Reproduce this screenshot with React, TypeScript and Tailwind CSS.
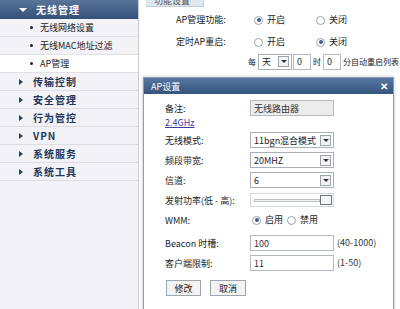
import React from 'react';

const font = { fontFamily: '"Noto Sans CJK SC", "Liberation Sans", sans-serif' };

const subItems = ['无线网络设置', '无线MAC地址过滤', 'AP管理'];
const topItems = ['传输控制', '安全管理', '行为管控', 'VPN', '系统服务', '系统工具'];

function Radio({ checked }: { checked?: boolean }) {
  return (
    <span className="inline-flex w-[9px] h-[9px] rounded-full border border-[#9aa3ad] bg-white items-center justify-center mr-[4px]">
      {checked && <span className="w-[4px] h-[4px] rounded-full bg-[#3f5f8a]" />}
    </span>
  );
}

function Select({ value, w = 'w-[84px]' }: { value: string; w?: string }) {
  return (
    <div className={`${w} h-[16px] border border-[#a9b0b8] bg-white flex items-center justify-between pl-[3px] pr-[2px]`}>
      <span className="text-[9px] leading-none text-[#222]">{value}</span>
      <span className="w-[11px] h-[11px] border border-[#9aa3ad] bg-[#f4f4f4] flex items-center justify-center">
        <span className="w-0 h-0 border-l-[3px] border-r-[3px] border-t-[3px] border-l-transparent border-r-transparent border-t-[#333]" />
      </span>
    </div>
  );
}

function Input({ value, w = 'w-[84px]', bg = 'bg-white' }: { value: string; w?: string; bg?: string }) {
  return (
    <div className={`${w} h-[16px] border border-[#b4bac2] ${bg} flex items-center pl-[3px]`}>
      <span className="text-[9px] leading-none text-[#333]">{value}</span>
    </div>
  );
}

function Row({ label, children, h = 'h-[20px]' }: { label: string; children?: React.ReactNode; h?: string }) {
  return (
    <div className={`flex items-center ${h}`}>
      <span className="w-[85px] shrink-0 text-[9px] text-[#222] leading-none">{label}</span>
      {children}
    </div>
  );
}

export default function App() {
  return (
    <div className="relative w-[400px] h-[309px] overflow-hidden bg-white flex whitespace-nowrap" style={font}>
      {/* 左メニュー */}
      <div className="w-[139px] shrink-0 h-full bg-[#f3f2f7] border-r border-[#c9c9d2] flex flex-col">
        <div className="h-[19px] bg-gradient-to-b from-[#587599] to-[#34507a] flex items-center pl-[19px]">
          <span className="w-0 h-0 border-l-[4px] border-r-[4px] border-t-[4px] border-l-transparent border-r-transparent border-t-white mr-[9px]" />
          <span className="text-[10px] font-bold text-white leading-none tracking-[1px]">无线管理</span>
        </div>
        {subItems.map((s, i) => (
          <div
            key={s}
            className={`h-[18px] flex items-center pl-[30px] border-b border-[#e1e0e8] ${i === 2 ? 'bg-white' : ''}`}
          >
            <span className="w-[3px] h-[3px] rounded-full bg-[#222] mr-[7px]" />
            <span className="text-[9px] text-[#222] leading-none">{s}</span>
          </div>
        ))}
        {topItems.map((s) => (
          <div key={s} className="h-[18px] flex items-center pl-[19px] border-b border-[#dcdbe4]">
            <span className="w-0 h-0 border-t-[3px] border-b-[3px] border-l-[4px] border-t-transparent border-b-transparent border-l-[#2a3f5c] mr-[10px]" />
            <span className="text-[10px] font-bold text-[#22385a] leading-none tracking-[1px]">{s}</span>
          </div>
        ))}
      </div>

      {/* メイン */}
      <div className="flex-1 min-w-0 h-full bg-white flex flex-col overflow-hidden">
        <div className="h-[7px] pl-[7px] flex">
          <div className="w-[58px] h-[7px] bg-[#dfe7ef] border-r border-b border-[#c3ceda] overflow-hidden flex items-end pl-[8px]">
            <span className="text-[9px] text-[#555] leading-none translate-y-[-1px]">功能设置</span>
          </div>
        </div>
        <div className="flex items-center h-[24px] mt-[1px] pl-[37px] text-[9px] text-[#222]">
          <span className="w-[78px] shrink-0">AP管理功能:</span>
          <span className="flex items-center w-[62px] shrink-0"><Radio checked />开启</span>
          <span className="flex items-center"><Radio />关闭</span>
        </div>
        <div className="flex items-center h-[20px] pl-[37px] text-[9px] text-[#222]">
          <span className="w-[78px] shrink-0">定时AP重启:</span>
          <span className="flex items-center w-[62px] shrink-0"><Radio />开启</span>
          <span className="flex items-center"><Radio checked />关闭</span>
        </div>
        <div className="flex items-center h-[19px] pl-[109px] text-[8px] text-[#222]">
          <span className="mr-[2px]">每</span>
          <Select value="天" w="w-[34px] shrink-0" />
          <span className="ml-[1px] shrink-0"><Input value="0" w="w-[18px]" /></span>
          <span className="mx-[2px]">时</span>
          <Input value="0" w="w-[18px] shrink-0" />
          <span className="ml-[2px]">分自动重启列表</span>
        </div>
      </div>

      {/* AP设置 ダイアログ */}
      <div className="absolute left-[143px] top-[77px] w-[251px] h-[250px] bg-white border border-[#8c9db2] shadow-[0_0_3px_rgba(0,0,0,0.25)]">
        <div className="h-[16px] bg-gradient-to-b from-[#56779f] to-[#34547e] flex items-center justify-between pl-[7px] pr-[5px]">
          <span className="text-[9px] text-white leading-none">AP设置</span>
          <span className="text-[10px] font-bold text-white leading-none">✕</span>
        </div>
        <div className="pl-[21px] pt-[6px] flex flex-col">
          <Row label="备注:" h="h-[16px]">
            <Input value="无线路由器" bg="bg-[#ececec]" />
          </Row>
          <div className="h-[12px] flex items-center">
            <span className="text-[9px] text-[#3a3aa0] underline leading-none">2.4GHz</span>
          </div>
          <div className="h-[2px]" />
          <Row label="无线模式:"><Select value="11bgn混合模式" /></Row>
          <Row label="频段带宽:"><Select value="20MHZ" /></Row>
          <Row label="信道:"><Select value="6" /></Row>
          <Row label="发射功率(低 - 高):">
            <div className="w-[84px] h-[14px] border border-[#d3d7dc] bg-white flex items-center pl-[3px] pr-[1px]">
              <div className="flex-1 h-[3px] border border-[#b9bec5] bg-[#f2f2f2]" />
              <div className="w-[12px] h-[10px] border border-[#6b7480] bg-[#f7f7f7]" />
            </div>
          </Row>
          <Row label="WMM:">
            <span className="flex items-center text-[9px] text-[#222] ml-[2px]"><Radio checked />启用</span>
            <span className="flex items-center text-[9px] text-[#222] ml-[4px]"><Radio />禁用</span>
          </Row>
          <div className="h-[3px]" />
          <Row label="Beacon 时槽:">
            <Input value="100" />
            <span className="ml-[3px] text-[9px] text-[#333]">(40-1000)</span>
          </Row>
          <Row label="客户端限制:">
            <Input value="11" />
            <span className="ml-[3px] text-[9px] text-[#333]">(1-50)</span>
          </Row>
          <div className="flex gap-[9px] mt-[7px] pl-[1px]">
            <button className="w-[35px] h-[16px] border border-[#9ea6b0] bg-[#f3f3f3] text-[9px] text-[#222] leading-none">修改</button>
            <button className="w-[36px] h-[16px] border border-[#9ea6b0] bg-[#f3f3f3] text-[9px] text-[#222] leading-none">取消</button>
          </div>
        </div>
      </div>
    </div>
  );
}
